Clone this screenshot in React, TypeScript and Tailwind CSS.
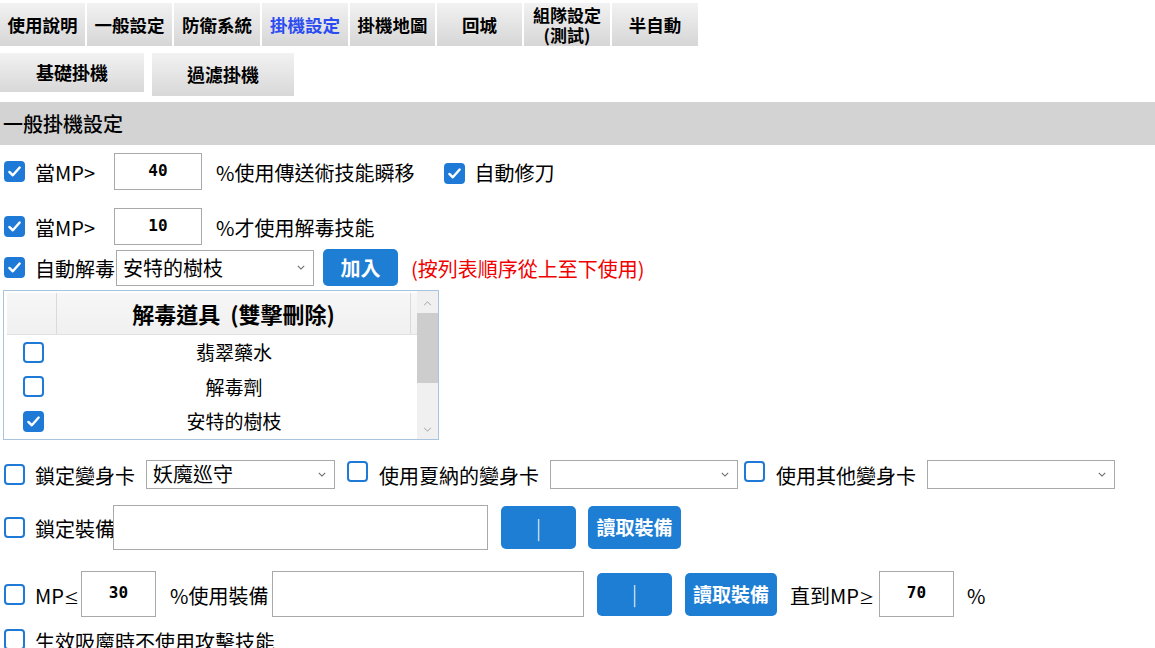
import { ReactNode } from 'react'

const FONT = '"Noto Sans CJK TC", "Noto Sans", sans-serif'

function Check({ on = false }: { on?: boolean }) {
  return (
    <span
      className={`inline-flex h-[21px] w-[21px] shrink-0 items-center justify-center rounded-[4px] border-2 border-[#1e7ad6] ${on ? 'bg-[#1e7ad6]' : 'bg-white'}`}
    >
      {on && (
        <svg viewBox="0 0 16 16" className="h-[15px] w-[15px]">
          <path d="M2.5 8.5 L6.2 12 L13.5 3.8" fill="none" stroke="white" strokeWidth="2.6" strokeLinecap="round" strokeLinejoin="round" />
        </svg>
      )}
    </span>
  )
}

function Label({ children, w = '', ml = 'ml-[10px]', cls = '' }: { children: ReactNode; w?: string; ml?: string; cls?: string }) {
  return <span className={`${ml} ${w} ${cls} shrink-0 whitespace-nowrap pt-[3px]`}>{children}</span>
}

function NumBox({ v, w = 'w-[88px]', h = 'h-[37px]' }: { v: string; w?: string; h?: string }) {
  return (
    <div className={`${w} ${h} flex shrink-0 items-center justify-center border border-[#a9a9a9] bg-white pb-[2px] font-['DejaVu_Sans_Mono'] text-[16px] font-bold text-black`}>
      {v}
    </div>
  )
}

function Select({ v = '', w, h = 'h-[29px]' }: { v?: string; w: string; h?: string }) {
  return (
    <div className={`${w} ${h} flex shrink-0 items-center justify-between border border-[#a9a9a9] bg-white pl-[6px] pr-[8px] text-[20px] text-black`}>
      <span className="whitespace-nowrap">{v}</span>
      <svg viewBox="0 0 10 6" className="h-[5px] w-[8px]">
        <path d="M1 1 L5 5 L9 1" fill="none" stroke="#666" strokeWidth="1.3" />
      </svg>
    </div>
  )
}

function BlueBtn({ children, w, h = 'h-[43px]', bold = true }: { children: ReactNode; w: string; h?: string; bold?: boolean }) {
  return (
    <div className={`${w} ${h} flex shrink-0 items-center justify-center whitespace-nowrap rounded-[5px] bg-[#1e7ed4] text-white ${bold ? 'text-[19px] font-bold' : 'text-[20px] font-light'}`}>
      {children}
    </div>
  )
}

function Tab({ label, active = false, w = 'w-[85px]' }: { label: ReactNode; active?: boolean; w?: string }) {
  return (
    <div
      className={`${w} flex h-[43px] shrink-0 items-center justify-center bg-gradient-to-b from-[#f2f2f2] to-[#d6d6d6] text-center text-[17.5px] font-bold leading-[20px] ${active ? 'text-[#2b4cf0]' : 'text-black'}`}
    >
      {label}
    </div>
  )
}

export default function App() {
  return (
    <div className="h-[648px] w-[1155px] overflow-hidden bg-white text-black" style={{ fontFamily: FONT }}>
      {/* main tabs */}
      <div className="flex gap-[2px] pt-[3px]">
        <Tab label="使用說明" />
        <Tab label="一般設定" />
        <Tab label="防衛系統" w="w-[86px]" />
        <Tab label="掛機設定" active w="w-[86px]" />
        <Tab label="掛機地圖" />
        <Tab label="回城" />
        <Tab label={<span className="text-[17px]">組隊設定<br />(測試)</span>} w="w-[86px]" />
        <Tab label="半自動" w="w-[86px]" />
      </div>

      {/* sub tabs */}
      <div className="mt-[7px] flex items-start gap-[8px]">
        <div className="flex h-[39px] w-[144px] items-center justify-center bg-gradient-to-b from-[#f2f2f2] to-[#d8d8d8] text-[18px] font-bold">基礎掛機</div>
        <div className="flex h-[43px] w-[142px] items-center justify-center bg-gradient-to-b from-[#f2f2f2] to-[#d8d8d8] text-[18px] font-bold">過濾掛機</div>
      </div>

      {/* section header */}
      <div className="mt-[6px] flex h-[43px] items-center bg-[#d3d3d3] pl-[3px] text-[20px] font-medium">一般掛機設定</div>

      <div className="mt-[8px] flex h-[37px] items-center pl-[4px] text-[20px]">
        <Check on />
        <Label w="w-[79px]">當MP&gt;</Label>
        <NumBox v="40" />
        <Label ml="ml-[14px]">%使用傳送術技能瞬移</Label>
        <span className="ml-[30px] pt-[3px]"><Check on /></span>
        <Label ml="ml-[9px]">自動修刀</Label>
      </div>

      <div className="mt-[18px] flex h-[37px] items-center pl-[4px] text-[20px]">
        <Check on />
        <Label w="w-[79px]">當MP&gt;</Label>
        <NumBox v="10" />
        <Label ml="ml-[14px]">%才使用解毒技能</Label>
      </div>

      <div className="mt-[4px] flex h-[37px] items-center pl-[4px] text-[20px]">
        <Check on />
        <Label w="w-[81px]">自動解毒</Label>
        <Select v="安特的樹枝" w="w-[198px]" h="h-[36px]" />
        <span className="ml-[9px]"><BlueBtn w="w-[75px]" h="h-[37px]"><span className="text-[20px]">加入</span></BlueBtn></span>
        <Label ml="ml-[13px]" cls="text-[#f00000]">(按列表順序從上至下使用)</Label>
      </div>

      {/* antidote list */}
      <div className="ml-[3px] mt-[4px] flex h-[150px] w-[436px] border border-[#a7c3de] bg-white">
        <div className="flex flex-1 flex-col pl-[3px] pt-[2px]">
          <div className="flex h-[42px] border-b border-[#e2e2e2] bg-gradient-to-b from-[#f7f7f7] to-[#f0f0f0]">
            <div className="w-[50px] border-r border-[#dadada]" />
            <div className="flex flex-1 items-center justify-center whitespace-nowrap border-r border-[#dadada] text-[22px] font-bold">解毒道具&nbsp;&nbsp;(雙擊刪除)</div>
            <div className="w-[6px]" />
          </div>
          {[['翡翠藥水', false], ['解毒劑', false], ['安特的樹枝', true]].map(([name, on]) => (
            <div key={name as string} className="flex h-[35px] items-center">
              <div className="flex w-[50px] justify-center pl-[2px]"><Check on={on as boolean} /></div>
              <div className="flex-1 pr-[6px] text-center text-[19px]">{name}</div>
            </div>
          ))}
        </div>
        <div className="flex w-[21px] flex-col bg-[#f0f0f0] pt-[2px]">
          <div className="flex h-[20px] items-center justify-center">
            <svg viewBox="0 0 10 6" className="h-[5px] w-[9px]"><path d="M1 5 L5 1 L9 5" fill="none" stroke="#a0a0a0" strokeWidth="1.2" /></svg>
          </div>
          <div className="h-[70px] bg-[#cdcdcd]" />
          <div className="flex-1" />
          <div className="flex h-[20px] items-center justify-center">
            <svg viewBox="0 0 10 6" className="h-[5px] w-[9px]"><path d="M1 1 L5 5 L9 1" fill="none" stroke="#a0a0a0" strokeWidth="1.2" /></svg>
          </div>
        </div>
      </div>

      {/* transform cards */}
      <div className="mt-[19px] flex h-[30px] items-center pl-[4px] text-[20px]">
        <Check />
        <Label w="w-[111px]">鎖定變身卡</Label>
        <Select v="妖魔巡守" w="w-[189px]" />
        <span className="ml-[12px]"><Check /></span>
        <Label ml="ml-[11px]" w="w-[171px]">使用夏納的變身卡</Label>
        <Select w="w-[188px]" />
        <span className="ml-[6px]"><Check /></span>
        <Label ml="ml-[11px]" w="w-[151px]">使用其他變身卡</Label>
        <Select w="w-[188px]" />
      </div>

      {/* lock equipment */}
      <div className="mt-[16px] flex h-[45px] items-center pl-[4px] text-[20px]">
        <Check />
        <Label ml="ml-[10px]" w="w-[78px]">鎖定裝備</Label>
        <div className="h-[45px] w-[375px] shrink-0 border border-[#a9a9a9] bg-white" />
        <span className="ml-[13px]"><BlueBtn w="w-[75px]" bold={false}>|</BlueBtn></span>
        <span className="ml-[12px]"><BlueBtn w="w-[93px]">讀取裝備</BlueBtn></span>
      </div>

      {/* mp equipment swap */}
      <div className="mt-[21px] flex h-[46px] items-center pl-[4px] text-[20px]">
        <Check />
        <Label w="w-[46px]">MP<span className="text-[15px]">≤</span></Label>
        <NumBox v="30" w="w-[75px]" h="h-[46px]" />
        <Label ml="ml-[14px]" w="w-[102px]">%使用裝備</Label>
        <div className="h-[46px] w-[312px] shrink-0 border border-[#a9a9a9] bg-white" />
        <span className="ml-[13px]"><BlueBtn w="w-[75px]" bold={false}>|</BlueBtn></span>
        <span className="ml-[13px]"><BlueBtn w="w-[92px]">讀取裝備</BlueBtn></span>
        <Label ml="ml-[13px]" w="w-[89px]">直到MP<span className="text-[15px]">≥</span></Label>
        <NumBox v="70" w="w-[75px]" h="h-[46px]" />
        <Label ml="ml-[13px]">%</Label>
      </div>

      <div className="mt-[10px] flex h-[24px] items-center pl-[4px] text-[20px]">
        <Check />
        <span className="ml-[10px] whitespace-nowrap pt-[6px]">生效吸魔時不使用攻擊技能</span>
      </div>
    </div>
  )
}
